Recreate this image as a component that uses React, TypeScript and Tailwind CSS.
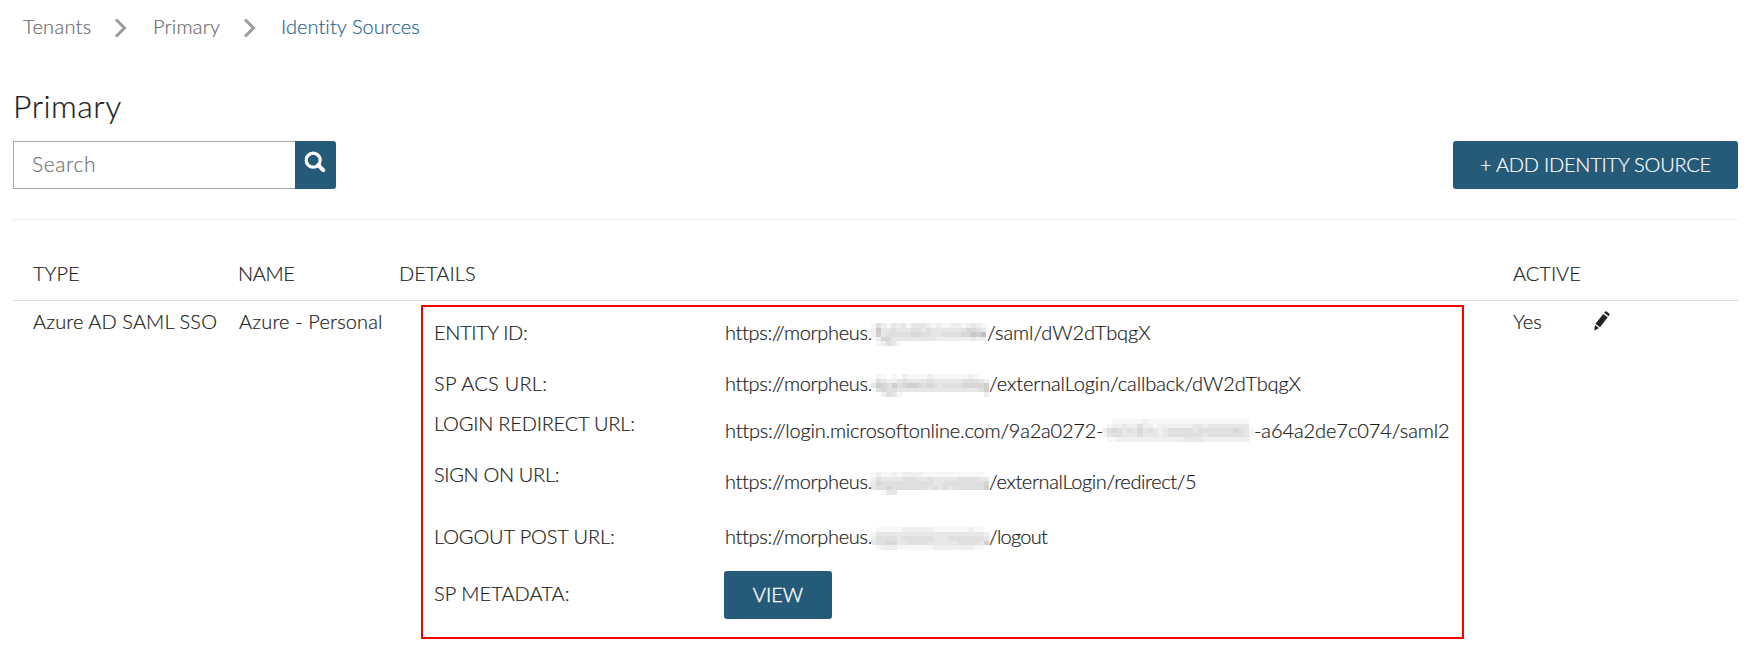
import type { ReactNode } from "react";

function Chevron() {
  return (
    <svg width="14" height="22" viewBox="0 0 14 22" fill="none" stroke="#9c9c9c" strokeWidth="3">
      <path d="M2 2.5 L10.5 11 L2 19.5" />
    </svg>
  );
}

function SearchIcon() {
  return (
    <svg width="22" height="22" viewBox="0 0 22 22" fill="none" stroke="#fff">
      <circle cx="9.2" cy="9.2" r="7" strokeWidth="3.2" />
      <path d="M14.2 14.2 L19.2 19.2" strokeWidth="4" strokeLinecap="round" />
    </svg>
  );
}

function PencilIcon() {
  return (
    <svg width="16" height="20" viewBox="0 0 16 20" fill="#222">
      <path d="M10.9 .8 Q11.6 -.1 12.6 .5 L15.2 2.5 Q16 3.2 15.4 4.1 L14.6 5.2 L10.1 1.8 Z" />
      <path d="M9.2 2.9 L13.7 6.3 L6 16.2 L1.5 12.8 Z" />
      <path d="M1 14 L4.9 17 L.3 19.8 Z" />
    </svg>
  );
}

/* Pixelated cover for hidden parts of an address; each digit is a shade. */
function Mosaic({ rows, width, className }: { rows: string[]; width: number; className: string }) {
  const cell = width / rows[0].length;
  return (
    <svg className={className} viewBox={`0 0 ${width} 25`} preserveAspectRatio="none" shapeRendering="crispEdges">
      {rows.map((row, y) =>
        [...row].map((d, x) => {
          const g = 255 - Number(d) * 8;
          return <rect key={`${x}-${y}`} x={x * cell} y={y * 5} width={cell} height={5} fill={`rgb(${g},${g},${g})`} />;
        })
      )}
    </svg>
  );
}

const host1 = [
  "14213231333212112212321",
  "27334333443433333345543",
  "26344444554433444455768",
  "12553333333332222222322",
  "01243100000000000000000",
];
const host2 = [
  "01101021111211111112100",
  "14322343333433333344432",
  "36546456654543444455556",
  "14544333333333333333346",
  "00243100000000000000002",
];
const host3 = [
  "12112122221111111111110",
  "24333344433433333444433",
  "35444444444433444444445",
  "34454444444343434444446",
  "00133000000000000000000",
];
const host4 = [
  "01111122222211111112110",
  "13333333333333333333332",
  "24444344444433344444443",
  "34455334444333333444436",
  "01222111111122222222110",
];
const guid = [
  "001111112111111111111111111110",
  "012232242212222222332333333330",
  "245434353432344444344444445431",
  "134433343332344444443444444431",
  "011222222222222233332222222220",
];

function Detail({ label, track, row, pad, children }: { label: string; track: string; row: string; pad: string; children: ReactNode }) {
  return (
    <div className={`flex items-start ${row}`}>
      <div className={`w-[290px] shrink-0 ${track}`}>{label}</div>
      <div className={`flex ${pad}`}>{children}</div>
    </div>
  );
}

function Morpheus({ rows, children, track, cover }: { rows: string[]; children: string; track: string; cover: string }) {
  return (
    <>
      <span className="w-[147px] pl-px tracking-[-0.32px]">https://morpheus.</span>
      <Mosaic rows={rows} width={115} className={`mt-[3px] h-[23px] ${cover}`} />
      <span className={track}>{children}</span>
    </>
  );
}

export default function App() {
  return (
    <div className="h-[656px] w-[1752px] overflow-hidden bg-white font-['Lato',sans-serif] text-[20px] leading-[24px] font-light whitespace-nowrap text-[#1c1c1c] [-webkit-text-stroke:0.2px]">
      <nav className="flex h-[86px] pt-[14px] pl-[23px] text-[#6c6c6c]">
        <span className="w-[91px] tracking-[0.3px]">Tenants</span>
        <span className="w-[39px] pt-[3px]"><Chevron /></span>
        <span className="w-[90px] tracking-[0.22px]">Primary</span>
        <span className="w-[38px] pt-[3px]"><Chevron /></span>
        <span className="tracking-[0.06px] text-[#2a6591]">Identity Sources</span>
      </nav>

      <h1 className="h-[55px] pl-[13px] text-[32px] leading-[40px] tracking-[0.5px]">Primary</h1>

      <div className="mr-[14px] ml-[13px] flex h-[79px] items-start justify-between border-b border-[#eeeeee]">
        <div className="flex">
          <div className="h-[48px] w-[282px] border border-r-0 border-[#a9a9a9] pt-[10px] pl-[18px] text-[21px] tracking-[0.6px] text-[#757575]">Search</div>
          <button className="flex h-[48px] w-[41px] items-start rounded-r-[3px] bg-[#265a79] pt-[10px] pl-[9px]">
            <SearchIcon />
          </button>
        </div>
        <button className="h-[48px] w-[285px] rounded-[3px] bg-[#265a79] pb-[3px] tracking-[-0.22px] text-white">+ ADD IDENTITY SOURCE</button>
      </div>

      <div className="mr-[14px] ml-[13px] flex h-[81px] border-b border-[#dddddd] pt-[41px] pl-[20px]">
        <span className="w-[205px]">TYPE</span>
        <span className="w-[161px] tracking-[-0.35px]">NAME</span>
        <span className="w-[1114px] tracking-[0.1px]">DETAILS</span>
        <span>ACTIVE</span>
      </div>

      <div className="mx-[13px] flex items-start pl-[20px]">
        <span className="w-[206px] pt-[8px] tracking-[0.1px]">Azure AD SAML SSO</span>
        <span className="w-[182px] pt-[8px] tracking-[0.15px]">Azure - Personal</span>
        <div className="mt-[4px] h-[334px] w-[1043px] border-2 border-[#ff0000] pt-[13px] pl-[11px]">
          <Detail label="ENTITY ID:" track="tracking-[-0.35px]" row="h-[51px]" pad="">
            <Morpheus rows={host1} cover="mr-px w-[115px]" track="tracking-[-0.05px]">/saml/dW2dTbqgX</Morpheus>
          </Detail>
          <Detail label="SP ACS URL:" track="tracking-[0.25px]" row="h-[40px]" pad="">
            <Morpheus rows={host2} cover="w-[118px]" track="tracking-[-0.12px]">/externalLogin/callback/dW2dTbqgX</Morpheus>
          </Detail>
          <Detail label="LOGIN REDIRECT URL:" track="tracking-[-0.2px]" row="h-[51px]" pad="pt-[7px]">
            <span className="w-[378px] pl-px tracking-[-0.21px]">https://login.microsoftonline.com/9a2a0272-</span>
            <Mosaic rows={guid} width={150} className="mt-px h-[23px] w-[152px]" />
            <span className="tracking-[-0.08px]">-a64a2de7c074/saml2</span>
          </Detail>
          <Detail label="SIGN ON URL:" track="tracking-[-0.33px]" row="h-[62px]" pad="pt-[7px]">
            <Morpheus rows={host3} cover="w-[118px]" track="tracking-[-0.38px]">/externalLogin/redirect/5</Morpheus>
          </Detail>
          <Detail label="LOGOUT POST URL:" track="tracking-[-0.13px]" row="h-[47px]" pad="">
            <Morpheus rows={host4} cover="w-[118px]" track="tracking-[-0.75px]">/logout</Morpheus>
          </Detail>
          <div className="flex items-start">
            <div className="w-[290px] pt-[10px] tracking-[0.05px]">SP METADATA:</div>
            <button className="h-[48px] w-[108px] rounded-[3px] bg-[#265a79] pb-[2px] text-white [-webkit-text-stroke:0.4px]">VIEW</button>
          </div>
        </div>
        <span className="ml-[49px] w-[81px] pt-[8px]">Yes</span>
        <span className="pt-[10px]"><PencilIcon /></span>
      </div>
    </div>
  );
}
